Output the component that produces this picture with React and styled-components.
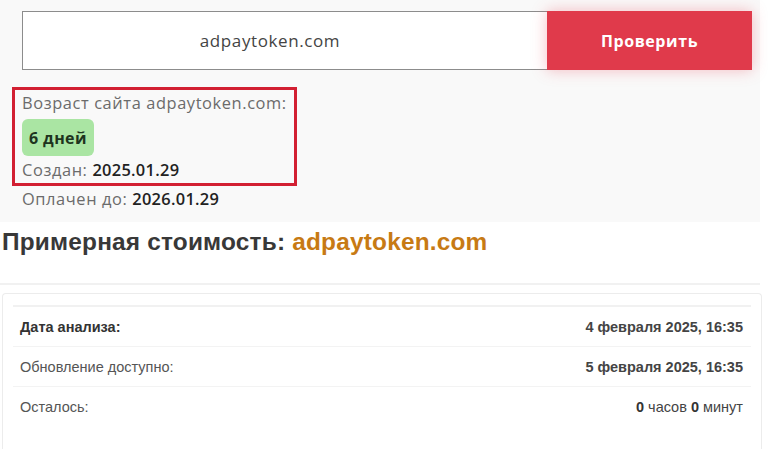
import React from 'react';
import styled, { createGlobalStyle } from 'styled-components';

const GlobalStyle = createGlobalStyle`
  html, body {
    margin: 0;
    padding: 0;
    background: #ffffff;
  }
  * {
    box-sizing: border-box;
  }
`;

const Page = styled.div`
  width: 768px;
  height: 449px;
  overflow: hidden;
  background: #ffffff;
`;

const CheckSection = styled.section`
  width: 760px;
  height: 222px;
  background: #f9f9f9;
  padding: 11px 8px 0 12px;
  font-family: 'Open Sans', 'Noto Sans', sans-serif;
`;

const SearchRow = styled.div`
  display: flex;
  margin-left: 10px;
  height: 59px;
`;

const DomainInput = styled.div`
  flex: 0 0 525px;
  display: flex;
  align-items: center;
  justify-content: center;
  padding-right: 30px;
  background: #ffffff;
  border: 1.5px solid #8c8c8c;
  border-right: none;
  font-size: 17px;
  letter-spacing: 0.6px;
  color: #444444;
`;

const CheckButton = styled.button`
  flex: 0 0 205px;
  border: none;
  background: #e03a4b;
  color: #ffffff;
  font-family: 'Open Sans', 'Noto Sans', sans-serif;
  font-weight: 700;
  font-size: 16px;
  letter-spacing: 0.6px;
  box-shadow: 0 0 14px rgba(232, 70, 85, 0.35);
`;

const AgeBox = styled.div`
  margin-top: 17px;
  width: 285px;
  border: 3px solid #d21f32;
  padding: 0 7px 0 7px;
  display: flex;
  flex-direction: column;
  align-items: flex-start;
`;

const InfoLine = styled.div`
  font-size: 16.4px;
  line-height: 26px;
  color: #6b6b6b;
  letter-spacing: 0.6px;
  padding-left: ${(p) => (p.$indent ? '10px' : '0')};
`;

const InfoValue = styled.span`
  color: #222222;
  font-weight: 600;
  letter-spacing: 0.3px;
`;

const AgeBadge = styled.div`
  margin: 3px 0 1px 0;
  height: 37px;
  padding: 0 7px;
  display: flex;
  align-items: center;
  border-radius: 6px;
  background: #aae5a3;
  color: #1e341e;
  font-weight: 700;
  font-size: 16px;
  letter-spacing: 0.4px;
`;

const PriceHeading = styled.h2`
  margin: 0 0 0 2px;
  height: 61px;
  padding-top: 6px;
  font-family: 'Liberation Sans', Arial, sans-serif;
  font-size: 24.4px;
  font-weight: 700;
  color: #383838;
  letter-spacing: 0.2px;
`;

const DomainName = styled.span`
  color: #c77a14;
`;

const Divider = styled.div`
  width: 760px;
  height: 2px;
  background: #f1f1f1;
`;

const StatsCard = styled.div`
  margin: 8px 6px 0 2px;
  height: 160px;
  border: 1px solid #ececec;
  border-bottom: none;
  border-radius: 4px 4px 0 0;
  padding: 11px 10px 0 10px;
  font-family: 'Liberation Sans', Arial, sans-serif;
`;

const StatsTable = styled.div`
  border-top: 2px solid #f1f1f1;
`;

const StatRow = styled.div`
  display: flex;
  justify-content: space-between;
  align-items: center;
  height: 40px;
  padding: 0 8px 0 7px;
  border-bottom: ${(p) => (p.$last ? 'none' : '1px solid #f3f3f3')};
  font-size: 14.5px;
  color: #555555;
`;

const StatLabel = styled.span`
  font-weight: ${(p) => (p.$bold ? 700 : 400)};
  color: ${(p) => (p.$bold ? '#333333' : '#555555')};
`;

const StatValue = styled.span`
  font-weight: ${(p) => (p.$bold ? 700 : 400)};
  color: #444444;
`;

const Strong = styled.b`
  color: #333333;
`;

export default function App() {
  return (
    <Page>
      <GlobalStyle />
      <CheckSection>
        <SearchRow>
          <DomainInput>adpaytoken.com</DomainInput>
          <CheckButton>Проверить</CheckButton>
        </SearchRow>

        <AgeBox>
          <InfoLine>Возраст сайта adpaytoken.com:</InfoLine>
          <AgeBadge>6 дней</AgeBadge>
          <InfoLine>
            Создан: <InfoValue>2025.01.29</InfoValue>
          </InfoLine>
        </AgeBox>
        <InfoLine $indent>
          Оплачен до: <InfoValue>2026.01.29</InfoValue>
        </InfoLine>
      </CheckSection>

      <PriceHeading>
        Примерная стоимость: <DomainName>adpaytoken.com</DomainName>
      </PriceHeading>
      <Divider />

      <StatsCard>
        <StatsTable>
          <StatRow>
            <StatLabel $bold>Дата анализа:</StatLabel>
            <StatValue $bold>4 февраля 2025, 16:35</StatValue>
          </StatRow>
          <StatRow>
            <StatLabel>Обновление доступно:</StatLabel>
            <StatValue $bold>5 февраля 2025, 16:35</StatValue>
          </StatRow>
          <StatRow $last>
            <StatLabel>Осталось:</StatLabel>
            <StatValue>
              <Strong>0</Strong> часов <Strong>0</Strong> минут
            </StatValue>
          </StatRow>
        </StatsTable>
      </StatsCard>
    </Page>
  );
}
